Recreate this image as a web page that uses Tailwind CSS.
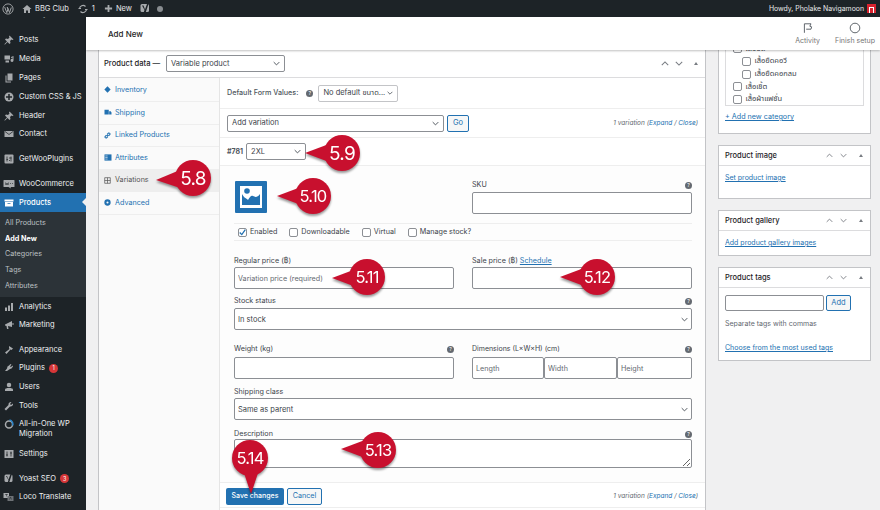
<!DOCTYPE html>
<html lang="en">
<head>
    <meta charset="UTF-8">
    <meta name="viewport" content="width=device-width, initial-scale=1.0">
    <title>Add New Product</title>
    <script src="https://cdn.jsdelivr.net/npm/@tailwindcss/browser@4"></script>
</head>
<body class="bg-[#f0f0f1] font-['Inter','Noto_Sans_Thai','Noto_Sans',sans-serif]">
<div class="relative w-[880px] h-[510px] overflow-hidden text-[7.2px] leading-[10px] text-[#3c434a]">

    <!-- Admin bar -->
    <header class="relative z-20 h-[17px] bg-[#1d2327] text-[#e8e9ea] flex items-center text-[7.5px]">
        <svg class="ml-[2px] w-[12px] h-[12px]" viewBox="0 0 20 20" fill="none" stroke="#a7aaad" stroke-width="1.5"><circle cx="10" cy="10" r="8.5"/><path d="M4.5 7l3.5 9 2-6-1.5-3M9 7l3.5 9 3-8.500" stroke-width="1.600"/></svg>
        <svg class="ml-[8px] w-[10px] h-[10px]" viewBox="0 0 20 20" fill="#a7aaad"><path d="M10 2L1 10h3v8h4v-5h4v5h4v-8h3z"/></svg>
        <span class="ml-[3px]">BBG Club</span>
        <svg class="ml-[9px] w-[10px] h-[10px]" viewBox="0 0 20 20" fill="none" stroke="#a7aaad" stroke-width="2.400"><path d="M3 10a7 7 0 0 1 12-5M17 10a7 7 0 0 1-12 5"/><path d="M1 9h5M14 11h5"/></svg>
        <span class="ml-[4px]">1</span>
        <svg class="ml-[9px] w-[9px] h-[9px]" viewBox="0 0 20 20" fill="#a7aaad"><path d="M8 2h4v6h6v4h-6v6H8v-6H2V8h6z"/></svg>
        <span class="ml-[3px]">New</span>
        <svg class="ml-[8px] w-[10px] h-[11px]" viewBox="0 0 20 22"><rect x="1" y="2" width="17" height="16" rx="3" fill="#a7aaad"/><path d="M7 5l3 8 4-11h3l-6 18H7l2-6-5-9z" fill="#1d2327"/></svg>
        <span class="ml-[7px] w-[6px] h-[6px] rounded-full bg-[#888c90]"></span>
        <span class="ml-auto text-[6.9px]">Howdy, Pholake Navigamoon</span>
        <span class="ml-[3px] mr-[4px] w-[9px] h-[9px] bg-[#d8232f] flex items-end justify-center"><span class="w-[5px] h-[6px] border-[1.5px] border-b-0 border-white"></span></span>
    </header>

    <div class="flex h-[493px]">
        <!-- Sidebar -->
        <aside class="w-[86px] shrink-0 bg-[#1d2327] text-[#eef0f1] text-[7.5px] overflow-hidden">
            <div class="h-[13px] -mt-[8px] mb-[9px] pl-[18px]">Goodlayers</div>
            <nav class="flex flex-col">
                <a class="h-[18.8px] flex items-center gap-[5px] pl-[4px]"><svg class="w-[10px] h-[10px]" viewBox="0 0 20 20" fill="#a7aaad"><path d="M11 1l8 8-2 1-2-1-3 3 1 4-2 2-4-4-5 5-1 0 0-1 5-5-4-4 2-2 4 1 3-3-1-2z"/></svg><span>Posts</span></a>
                <a class="h-[18.8px] flex items-center gap-[5px] pl-[4px]"><svg class="w-[10px] h-[10px]" viewBox="0 0 20 20" fill="#a7aaad"><path d="M1 3h11v8H1zM14 6l5-2v9a3 3 0 1 1-2-3V7l-3 1zM3 13h7v4H3z"/></svg><span>Media</span></a>
                <a class="h-[18.8px] flex items-center gap-[5px] pl-[4px]"><svg class="w-[10px] h-[10px]" viewBox="0 0 20 20" fill="#a7aaad"><path d="M7 1h10v14H7zM3 5h2v12h9v2H3z"/></svg><span>Pages</span></a>
                <a class="h-[18.8px] flex items-center gap-[5px] pl-[4px]"><svg class="w-[10px] h-[10px]" viewBox="0 0 20 20"><circle cx="10" cy="10" r="9" fill="#a7aaad"/><path d="M8.500 4h3v4.500H16v3h-4.500V16h-3v-4.500H4v-3h4.500z" fill="#1d2327"/></svg><span class="whitespace-nowrap">Custom CSS &amp; JS</span></a>
                <a class="h-[18.8px] flex items-center gap-[5px] pl-[4px]"><svg class="w-[10px] h-[10px]" viewBox="0 0 20 20" fill="#a7aaad"><path d="M11 1l8 8-2 1-2-1-3 3 1 4-2 2-4-4-5 5-1 0 0-1 5-5-4-4 2-2 4 1 3-3-1-2z"/></svg><span>Header</span></a>
                <a class="h-[18.8px] flex items-center gap-[5px] pl-[4px]"><svg class="w-[10px] h-[10px]" viewBox="0 0 20 20" fill="#a7aaad"><path d="M1 4h18v12H1z"/><path d="M2 5l8 6 8-6" fill="none" stroke="#1d2327" stroke-width="1.500"/></svg><span>Contact</span></a>
                <a class="h-[18.8px] mt-[6px] flex items-center gap-[5px] pl-[4px]"><svg class="w-[10px] h-[10px]" viewBox="0 0 20 20"><rect x="1" y="1" width="18" height="18" rx="2" fill="#a7aaad"/><path d="M6 5v10M5 11h3M14 5v10M10 8h5M10 13h2" stroke="#1d2327" stroke-width="1.500"/></svg><span>GetWooPlugins</span></a>
                <a class="h-[18.8px] mt-[6px] flex items-center gap-[3px] pl-[3px]"><svg class="w-[12px] h-[10px]" viewBox="0 0 24 20"><path d="M2 2h20a1 1 0 0 1 1 1v12a1 1 0 0 1-1 1h-7l1 3-5-3H2a1 1 0 0 1-1-1V3a1 1 0 0 1 1-1z" fill="#a7aaad"/><path d="M5 7l1 5 2-4 2 4 1-5M14 9h2M18 9h2" stroke="#1d2327" stroke-width="1.200" fill="none"/></svg><span class="ml-[1px]">WooCommerce</span></a>
                <a class="relative h-[18.8px] bg-[#2271b1] text-white flex items-center gap-[5px] pl-[4px]"><svg class="w-[10px] h-[10px]" viewBox="0 0 20 20" fill="#fff"><path d="M1 3h18v4H1zM2 8h16v9H2z"/><path d="M7 10h6v1.500H7z" fill="#2271b1"/></svg><span class="font-medium">Products</span><span class="absolute right-0 top-[5px] border-y-[4px] border-r-[4px] border-y-transparent border-r-[#f0f0f1]"></span></a>
                <div class="bg-[#2c3338] text-[#bcc0c3] h-[85px] pt-[3px] pl-[5px] text-[7.2px] flex flex-col">
                    <a class="h-[15.7px] flex items-center">All Products</a>
                    <a class="h-[15.7px] flex items-center font-bold text-white">Add New</a>
                    <a class="h-[15.7px] flex items-center">Categories</a>
                    <a class="h-[15.7px] flex items-center">Tags</a>
                    <a class="h-[15.7px] flex items-center">Attributes</a>
                </div>
                <a class="h-[18.8px] flex items-center gap-[5px] pl-[4px]"><svg class="w-[10px] h-[10px]" viewBox="0 0 20 20" fill="#a7aaad"><path d="M2 11h4v7H2zM8 7h4v11H8zM14 2h4v16h-4z"/></svg><span>Analytics</span></a>
                <a class="h-[18.8px] flex items-center gap-[5px] pl-[4px]"><svg class="w-[10px] h-[10px]" viewBox="0 0 20 20" fill="#a7aaad"><path d="M2 9l14-7v12L8 12l1 6H6l-1-6-3-1zM17 6h2v4h-2z"/></svg><span>Marketing</span></a>
                <a class="h-[18.8px] mt-[5.500px] flex items-center gap-[5px] pl-[4px]"><svg class="w-[10px] h-[10px]" viewBox="0 0 20 20" fill="#a7aaad"><path d="M10 2l8 5-3 3-2-1-8 9-3-3 9-7-1-2z"/></svg><span>Appearance</span></a>
                <a class="h-[18.8px] flex items-center gap-[5px] pl-[4px]"><svg class="w-[10px] h-[10px]" viewBox="0 0 20 20" fill="#a7aaad"><path d="M13 2l2 1-3 4 2 1 3-3 1 2-3 4-3 1-3 2-3 2H2l4-5 1-4 3-2z"/></svg><span>Plugins</span><span class="-ml-[1px] w-[9.500px] h-[9.500px] rounded-full bg-[#d63638] text-white text-[5.5px] flex items-center justify-center">1</span></a>
                <a class="h-[18.8px] flex items-center gap-[5px] pl-[4px]"><svg class="w-[10px] h-[10px]" viewBox="0 0 20 20" fill="#a7aaad"><circle cx="10" cy="6" r="4.500"/><path d="M2 18v-3c0-2 3-3 8-3s8 1 8 3v3z"/></svg><span>Users</span></a>
                <a class="h-[18.8px] flex items-center gap-[5px] pl-[4px]"><svg class="w-[10px] h-[10px]" viewBox="0 0 20 20" fill="#a7aaad"><path d="M18 5l-4 3-2-2 3-4a5 5 0 0 0-6 6L1 16l3 3 8-8a5 5 0 0 0 6-6z"/></svg><span>Tools</span></a>
                <a class="h-[29px] flex items-start gap-[5px] pl-[4px] pt-[4px]"><svg class="w-[10px] h-[10px] shrink-0" viewBox="0 0 20 20" fill="none"><circle cx="10" cy="11" r="7" stroke="#a7aaad" stroke-width="3"/><path d="M11 2a8 8 0 0 1 6 11" stroke="#2e86c9" stroke-width="3"/></svg><span>All-in-One WP Migration</span></a>
                <a class="h-[18.8px] flex items-center gap-[5px] pl-[4px]"><svg class="w-[10px] h-[10px]" viewBox="0 0 20 20"><rect x="1" y="2" width="18" height="16" fill="#a7aaad"/><path d="M6 5v10M4 12h4M14 5v10M12 8h4" stroke="#1d2327" stroke-width="1.500"/></svg><span>Settings</span></a>
                <a class="h-[18.8px] mt-[6px] flex items-center gap-[5px] pl-[4px]"><svg class="w-[10px] h-[11px]" viewBox="0 0 20 22"><rect x="1" y="3" width="16" height="15" rx="3" fill="#a7aaad"/><path d="M6 6l3 7 4-11h3l-6 18H7l2-6-5-8z" fill="#1d2327"/></svg><span>Yoast SEO</span><span class="-ml-[1px] w-[9.500px] h-[9.500px] rounded-full bg-[#d63638] text-white text-[5.5px] flex items-center justify-center">3</span></a>
                <a class="h-[18.8px] flex items-center gap-[5px] pl-[3px]"><svg class="w-[11px] h-[10px]" viewBox="0 0 22 20"><path d="M1 2h11v10H1z" fill="#a7aaad"/><path d="M9 8h12v10H9z" fill="#6e7276"/><path d="M4 5h6M7 4v5M13 15l2-5 2 5" stroke="#1d2327" fill="none"/></svg><span class="whitespace-nowrap">Loco Translate</span></a>
            </nav>
        </aside>

        <!-- Main -->
        <main class="flex-1 min-w-0 flex flex-col">
            <div class="relative z-10 h-[33px] shrink-0 bg-white shadow-[0_1px_2px_rgba(0,0,0,0.25)] flex items-center pl-[22px] pr-[5px]">
                <h1 class="text-[8px] font-medium text-[#1e1e1e]">Add New</h1>
                <div class="ml-auto flex items-start gap-[15px] text-[#757575] text-[7px]">
                    <div class="flex flex-col items-center gap-[2px]">
                        <svg class="w-[12px] h-[12px]" viewBox="0 0 20 20" fill="none" stroke="#50575e" stroke-width="1.500"><path d="M4 18V3h11l-2 4 3 1-1 4H7"/></svg>
                        <span>Activity</span>
                    </div>
                    <div class="flex flex-col items-center gap-[2px]">
                        <svg class="w-[12px] h-[12px]" viewBox="0 0 20 20" fill="none" stroke="#50575e" stroke-width="1.500"><circle cx="10" cy="10" r="8"/></svg>
                        <span>Finish setup</span>
                    </div>
                </div>
            </div>

            <div class="flex-1 min-h-0 flex gap-[12px] pl-[12px] overflow-hidden">
                <!-- Product data -->
                <section class="w-[608px] shrink-0 bg-white border-x border-[#c3c4c7] flex flex-col">
                    <div class="h-[28px] shrink-0 border-b border-[#dcdcde] flex items-center pl-[5px] pr-[7px]">
                        <span class="text-[7.6px] font-medium text-[#1d2327]">Product data —</span>
                        <div class="ml-[6px] w-[119px] h-[17px] bg-white border border-[#8c8f94] rounded-[2px] flex items-center justify-between px-[4px] text-[7.5px]"><span>Variable product</span><svg class="w-[7px] h-[5px]" viewBox="0 0 10 6" fill="none" stroke="#50575e" stroke-width="1.400"><path d="M1 1l4 4 4-4"/></svg></div>
                        <div class="ml-auto flex items-center gap-[6px]">
                            <svg class="w-[8px] h-[5px]" viewBox="0 0 10 6" fill="none" stroke="#787c82" stroke-width="1.300"><path d="M1 5l4-4 4 4"/></svg>
                            <svg class="w-[8px] h-[5px]" viewBox="0 0 10 6" fill="none" stroke="#787c82" stroke-width="1.300"><path d="M1 1l4 4 4-4"/></svg>
                            <span class="ml-[5px] border-x-[2.500px] border-b-[3px] border-x-transparent border-b-[#787c82]"></span>
                        </div>
                    </div>

                    <div class="flex-1 min-h-0 flex">
                        <!-- Tabs -->
                        <ul class="w-[121px] shrink-0 bg-[#fafafa] border-r border-[#e5e5e5] text-[#2271b1] text-[7.2px]">
                            <li class="h-[24px] border-b border-[#eee] flex items-center gap-[4px] pl-[5px]"><svg class="w-[7px] h-[7px]" viewBox="0 0 20 20" fill="#2271b1"><path d="M10 1l9 9-9 9-9-9z"/></svg><span>Inventory</span></li>
                            <li class="h-[22.5px] border-b border-[#eee] flex items-center gap-[3px] pl-[5px]"><svg class="w-[8px] h-[7px]" viewBox="0 0 20 18" fill="#2271b1"><path d="M1 2h11v12H1zM13 6h4l2 3v5h-6z"/></svg><span>Shipping</span></li>
                            <li class="h-[22.5px] border-b border-[#eee] flex items-center gap-[4px] pl-[5px]"><svg class="w-[7px] h-[7px]" viewBox="0 0 20 20" fill="none" stroke="#2271b1" stroke-width="3"><path d="M8 12l4-4M7 9l-4 4a3 3 0 0 0 4 4l4-4M13 11l4-4a3 3 0 0 0-4-4L9 7"/></svg><span>Linked Products</span></li>
                            <li class="h-[22.5px] border-b border-[#eee] flex items-center gap-[3px] pl-[5px]"><svg class="w-[8px] h-[7px]" viewBox="0 0 20 18" fill="#2271b1"><path d="M1 1h18v16H1z"/><path d="M3 5h6M3 9h6M3 13h6" stroke="#fafafa" stroke-width="1.500"/></svg><span>Attributes</span></li>
                            <li class="h-[22.5px] bg-[#eeeeee] border-b border-[#eee] text-[#555] flex items-center gap-[4px] pl-[5px]"><svg class="w-[7px] h-[7px]" viewBox="0 0 20 20" fill="none" stroke="#555" stroke-width="2"><path d="M2 2h16v16H2zM2 10h16M10 2v16"/></svg><span>Variations</span></li>
                            <li class="h-[22.5px] border-b border-[#eee] flex items-center gap-[4px] pl-[5px]"><svg class="w-[7px] h-[7px]" viewBox="0 0 20 20" fill="none" stroke="#2271b1" stroke-width="6"><circle cx="10" cy="10" r="6"/></svg><span>Advanced</span></li>
                        </ul>

                        <!-- Variations panel -->
                        <div class="flex-1 min-w-0 flex flex-col">
                            <div class="h-[31px] shrink-0 border-b border-[#eee] flex items-center pl-[7px]">
                                <span class="font-medium text-[#50575e]">Default Form Values:</span>
                                <span class="ml-[8px] w-[7px] h-[7px] rounded-full bg-[#646970] text-white text-[5px] flex items-center justify-center">?</span>
                                <div class="ml-[5px] w-[80px] h-[17px] border border-[#c3c4c7] rounded-[2px] flex items-center justify-between px-[4px] text-[7.5px]"><span class="whitespace-nowrap">No default ขนาด...</span><svg class="w-[6px] h-[4px]" viewBox="0 0 10 6" fill="none" stroke="#50575e" stroke-width="1.400"><path d="M1 1l4 4 4-4"/></svg></div>
                            </div>
                            <div class="h-[29px] shrink-0 border-b border-[#eee] flex items-center pl-[7px] pr-[7px]">
                                <div class="w-[217px] h-[17px] border border-[#8c8f94] rounded-[2px] flex items-center justify-between px-[4px] text-[7.5px]"><span>Add variation</span><svg class="w-[7px] h-[5px]" viewBox="0 0 10 6" fill="none" stroke="#50575e" stroke-width="1.400"><path d="M1 1l4 4 4-4"/></svg></div>
                                <button class="ml-[3px] w-[22px] h-[17px] border border-[#2271b1] bg-[#f6f7f7] rounded-[2px] text-[#2271b1] text-[7.5px]">Go</button>
                                <span class="ml-auto italic text-[#646970] text-[6.5px]">1 variation (<span class="text-[#2271b1]">Expand</span> / <span class="text-[#2271b1]">Close</span>)</span>
                            </div>
                            <div class="h-[28px] shrink-0 border-b border-[#eee] flex items-center pl-[7px]">
                                <span class="font-bold text-[7px] text-[#50575e]">#781</span>
                                <div class="ml-[3px] w-[60px] h-[17px] border border-[#8c8f94] rounded-[2px] flex items-center justify-between px-[4px] text-[7.5px]"><span>2XL</span><svg class="w-[7px] h-[5px]" viewBox="0 0 10 6" fill="none" stroke="#50575e" stroke-width="1.400"><path d="M1 1l4 4 4-4"/></svg></div>
                            </div>

                            <div class="flex-1 min-h-0 bg-[#fdfdfd] pl-[14px] pr-[13px] flex flex-col">
                                <div class="h-[57px] shrink-0 flex justify-between">
                                    <div class="mt-[15px] ml-[1px] w-[32px] h-[32px] bg-[#2271b1] rounded-[1px] p-[4px]">
                                        <svg class="w-full h-full" viewBox="0 0 24 24"><path d="M1 1h22v22H1z" fill="#fff"/><path d="M3 9c2 4 4 4 6 6 2-3 3-5 5-4s4 2 7-2v11H3z" fill="#2271b1"/><circle cx="8" cy="6" r="2.800" fill="#2271b1"/></svg>
                                    </div>
                                    <div class="w-[220px] pt-[14px]">
                                        <div class="flex justify-between items-center"><span>SKU</span><span class="w-[7px] h-[7px] rounded-full bg-[#646970] text-white text-[5px] flex items-center justify-center">?</span></div>
                                        <input class="mt-[2px] w-full h-[22px] border border-[#8c8f94] rounded-[2px] bg-white" aria-label="SKU">
                                    </div>
                                </div>
                                <div class="h-[18px] shrink-0 border-y border-[#eee] flex items-center gap-[12px] pl-[4px]">
                                    <label class="flex items-center gap-[3px]"><span class="w-[9px] h-[9px] border border-[#8c8f94] rounded-[2px] bg-white flex items-center justify-center"><svg class="w-[7px] h-[7px]" viewBox="0 0 10 10" fill="none" stroke="#2271b1" stroke-width="1.800"><path d="M1 5l3 3 5-7"/></svg></span>Enabled</label>
                                    <label class="flex items-center gap-[3px]"><span class="w-[9px] h-[9px] border border-[#8c8f94] rounded-[2px] bg-white"></span>Downloadable</label>
                                    <label class="flex items-center gap-[3px]"><span class="w-[9px] h-[9px] border border-[#8c8f94] rounded-[2px] bg-white"></span>Virtual</label>
                                    <label class="flex items-center gap-[3px]"><span class="w-[9px] h-[9px] border border-[#8c8f94] rounded-[2px] bg-white"></span>Manage stock?</label>
                                </div>

                                <div class="mt-[15px] grid grid-cols-[220px_220px] justify-between">
                                    <div>
                                        <div class="h-[10px]">Regular price (฿)</div>
                                        <input class="mt-[1px] w-full h-[22px] px-[3px] border border-[#8c8f94] rounded-[2px] bg-white placeholder:text-[#646970]" placeholder="Variation price (required)">
                                    </div>
                                    <div>
                                        <div class="h-[10px]">Sale price (฿) <span class="text-[#2271b1] underline">Schedule</span></div>
                                        <input class="mt-[1px] w-full h-[22px] border border-[#8c8f94] rounded-[2px] bg-white" aria-label="Sale price">
                                    </div>
                                </div>

                                <div class="mt-[7px] h-[10px] flex justify-between items-center"><span>Stock status</span><span class="w-[7px] h-[7px] rounded-full bg-[#646970] text-white text-[5px] flex items-center justify-center">?</span></div>
                                <div class="mt-[2px] h-[22px] shrink-0 border border-[#8c8f94] rounded-[2px] bg-white flex items-center justify-between px-[3px] pt-[1px] text-[7.5px]"><span>In stock</span><svg class="w-[7px] h-[5px]" viewBox="0 0 10 6" fill="none" stroke="#50575e" stroke-width="1.400"><path d="M1 1l4 4 4-4"/></svg></div>

                                <div class="mt-[14px] grid grid-cols-[220px_220px] justify-between">
                                    <div>
                                        <div class="h-[10px] flex justify-between items-center"><span>Weight (kg)</span><span class="w-[7px] h-[7px] rounded-full bg-[#646970] text-white text-[5px] flex items-center justify-center">?</span></div>
                                        <input class="mt-[3px] w-full h-[22px] border border-[#8c8f94] rounded-[2px] bg-white" aria-label="Weight">
                                    </div>
                                    <div>
                                        <div class="h-[10px] flex justify-between items-center"><span class="text-[7px]">Dimensions (L×W×H) (cm)</span><span class="w-[7px] h-[7px] rounded-full bg-[#646970] text-white text-[5px] flex items-center justify-center">?</span></div>
                                        <div class="mt-[3px] grid grid-cols-[72px_73px_75px]">
                                            <input class="w-full h-[22px] px-[3px] border border-[#8c8f94] rounded-[2px] bg-white placeholder:text-[#646970]" placeholder="Length">
                                            <input class="w-full h-[22px] px-[3px] border border-[#8c8f94] rounded-[2px] bg-white placeholder:text-[#646970]" placeholder="Width">
                                            <input class="w-full h-[22px] px-[3px] border border-[#8c8f94] rounded-[2px] bg-white placeholder:text-[#646970]" placeholder="Height">
                                        </div>
                                    </div>
                                </div>

                                <div class="mt-[8px] h-[10px]">Shipping class</div>
                                <div class="mt-[1px] h-[22px] shrink-0 border border-[#8c8f94] rounded-[2px] bg-white flex items-center justify-between px-[3px] pt-[1px] text-[7.5px]"><span>Same as parent</span><svg class="w-[7px] h-[5px]" viewBox="0 0 10 6" fill="none" stroke="#50575e" stroke-width="1.400"><path d="M1 1l4 4 4-4"/></svg></div>

                                <div class="mt-[9px] h-[10px] flex justify-between items-center"><span>Description</span><span class="w-[7px] h-[7px] rounded-full bg-[#646970] text-white text-[5px] flex items-center justify-center">?</span></div>
                                <textarea class="h-[29px] shrink-0 border border-[#8c8f94] rounded-[2px] bg-white resize-y" aria-label="Description"></textarea>
                            </div>

                            <div class="h-[26px] shrink-0 mb-[2px] pt-[2px] border-y border-[#eee] bg-white flex items-center pl-[6px] pr-[7px]">
                                <button class="w-[58px] h-[17px] bg-[#2271b1] rounded-[2px] text-white text-[7px] font-medium">Save changes</button>
                                <button class="ml-[3px] w-[35px] h-[17px] border border-[#2271b1] bg-[#f6f7f7] rounded-[2px] text-[#2271b1]">Cancel</button>
                                <span class="ml-auto italic text-[#646970] text-[6.5px]">1 variation (<span class="text-[#2271b1]">Expand</span> / <span class="text-[#2271b1]">Close</span>)</span>
                            </div>
                        </div>
                    </div>
                </section>

                <!-- Right column -->
                <div class="w-[153px] shrink-0 flex flex-col gap-[11px]">
                    <section class="h-[84px] bg-white border border-t-0 border-[#c3c4c7] px-[6px]">
                        <ul class="h-[56px] border-x border-b border-[#dcdcde] pl-[7px] text-[7.5px] overflow-hidden">
                            <li class="flex items-center gap-[3.5px] h-[12.7px] -mt-[7.7px]"><span class="w-[9px] h-[9px] border border-[#8c8f94] rounded-[2px]"></span>เสื้อยืด</li>
                            <li class="flex items-center gap-[3.5px] h-[12.7px] pl-[9px]"><span class="w-[9px] h-[9px] border border-[#8c8f94] rounded-[2px]"></span>เสื้อยืดคอวี</li>
                            <li class="flex items-center gap-[3.5px] h-[12.7px] pl-[9px]"><span class="w-[9px] h-[9px] border border-[#8c8f94] rounded-[2px]"></span>เสื้อยืดคอกลม</li>
                            <li class="flex items-center gap-[3.5px] h-[12.7px]"><span class="w-[9px] h-[9px] border border-[#8c8f94] rounded-[2px]"></span>เสื้อเชิ้ต</li>
                            <li class="flex items-center gap-[3.5px] h-[12.7px]"><span class="w-[9px] h-[9px] border border-[#8c8f94] rounded-[2px]"></span>เสื้อผ้าแฟชั่น</li>
                        </ul>
                        <a class="block mt-[6px] text-[#2271b1] underline">+ Add new category</a>
                    </section>

                    <section class="h-[54px] bg-white border border-[#c3c4c7]">
                        <div class="h-[20px] border-b border-[#dcdcde] flex items-center pl-[6px] pr-[7px]">
                            <h2 class="font-medium text-[#1d2327] text-[7.5px]">Product image</h2>
                            <div class="ml-auto flex items-center gap-[7px]">
                                <svg class="w-[7px] h-[5px]" viewBox="0 0 10 6" fill="none" stroke="#787c82" stroke-width="1.300"><path d="M1 5l4-4 4 4"/></svg>
                                <svg class="w-[7px] h-[5px]" viewBox="0 0 10 6" fill="none" stroke="#787c82" stroke-width="1.300"><path d="M1 1l4 4 4-4"/></svg>
                                <span class="ml-[5px] border-x-[2px] border-b-[3px] border-x-transparent border-b-[#787c82]"></span>
                            </div>
                        </div>
                        <a class="block mt-[7px] ml-[6px] text-[#2271b1] underline text-[7px]">Set product image</a>
                    </section>

                    <section class="h-[46px] bg-white border border-[#c3c4c7]">
                        <div class="h-[20px] border-b border-[#dcdcde] flex items-center pl-[6px] pr-[7px]">
                            <h2 class="font-medium text-[#1d2327] text-[7.5px]">Product gallery</h2>
                            <div class="ml-auto flex items-center gap-[7px]">
                                <svg class="w-[7px] h-[5px]" viewBox="0 0 10 6" fill="none" stroke="#787c82" stroke-width="1.300"><path d="M1 5l4-4 4 4"/></svg>
                                <svg class="w-[7px] h-[5px]" viewBox="0 0 10 6" fill="none" stroke="#787c82" stroke-width="1.300"><path d="M1 1l4 4 4-4"/></svg>
                                <span class="ml-[5px] border-x-[2px] border-b-[3px] border-x-transparent border-b-[#787c82]"></span>
                            </div>
                        </div>
                        <a class="block mt-[7px] ml-[6px] text-[#2271b1] underline text-[7px]">Add product gallery images</a>
                    </section>

                    <section class="h-[94px] bg-white border border-[#c3c4c7]">
                        <div class="h-[20px] border-b border-[#dcdcde] flex items-center pl-[6px] pr-[7px]">
                            <h2 class="font-medium text-[#1d2327] text-[7.5px]">Product tags</h2>
                            <div class="ml-auto flex items-center gap-[7px]">
                                <svg class="w-[7px] h-[5px]" viewBox="0 0 10 6" fill="none" stroke="#787c82" stroke-width="1.300"><path d="M1 5l4-4 4 4"/></svg>
                                <svg class="w-[7px] h-[5px]" viewBox="0 0 10 6" fill="none" stroke="#787c82" stroke-width="1.300"><path d="M1 1l4 4 4-4"/></svg>
                                <span class="ml-[5px] border-x-[2px] border-b-[3px] border-x-transparent border-b-[#787c82]"></span>
                            </div>
                        </div>
                        <div class="mt-[7px] ml-[6px] flex gap-[2px]">
                            <input class="w-[99px] h-[16px] border border-[#8c8f94] rounded-[2px] bg-white" aria-label="Add new tag">
                            <button class="w-[25px] h-[16px] border border-[#2271b1] bg-[#f6f7f7] rounded-[2px] text-[#2271b1] text-[7.5px]">Add</button>
                        </div>
                        <p class="mt-[8px] ml-[6px] text-[#646970] text-[7px]">Separate tags with commas</p>
                        <a class="block mt-[14px] ml-[6px] text-[#2271b1] underline text-[7px]">Choose from the most used tags</a>
                    </section>
                </div>
            </div>
        </main>
    </div>

    <!-- Numbered callouts over the screenshot -->
    <svg class="absolute inset-0 z-30 w-[880px] h-[510px] pointer-events-none drop-shadow-[0_2px_1px_rgba(0,0,0,0.4)]" viewBox="0 0 880 510" font-family="Inter, 'Liberation Sans', sans-serif" font-size="19" fill="#fff" text-anchor="middle" letter-spacing="-0.8">
        <g fill="#c8102e">
            <circle cx="193" cy="178" r="18"/><path d="M156 180l24-10v18z"/>
            <circle cx="342" cy="153" r="18"/><path d="M305 153l24-9v18z"/>
            <circle cx="313" cy="196" r="18"/><path d="M277 196l24-9v18z"/>
            <circle cx="367" cy="277" r="18"/><path d="M332 278l24-9v18z"/>
            <circle cx="597" cy="277" r="18"/><path d="M560 277l24-9v18z"/>
            <circle cx="378" cy="450" r="18"/><path d="M341 449l24-9v18z"/>
            <circle cx="250" cy="458" r="18"/><path d="M251 494l-8-24h16z"/>
        </g>
        <text x="193" y="185">5.8</text>
        <text x="342" y="160">5.9</text>
        <text x="313" y="202" font-size="16.500">5.10</text>
        <text x="367" y="283" font-size="16.500">5.11</text>
        <text x="597" y="283" font-size="16.500">5.12</text>
        <text x="378" y="456" font-size="16.500">5.13</text>
        <text x="250" y="464" font-size="16.500">5.14</text>
    </svg>
</div>
</body>
</html>
